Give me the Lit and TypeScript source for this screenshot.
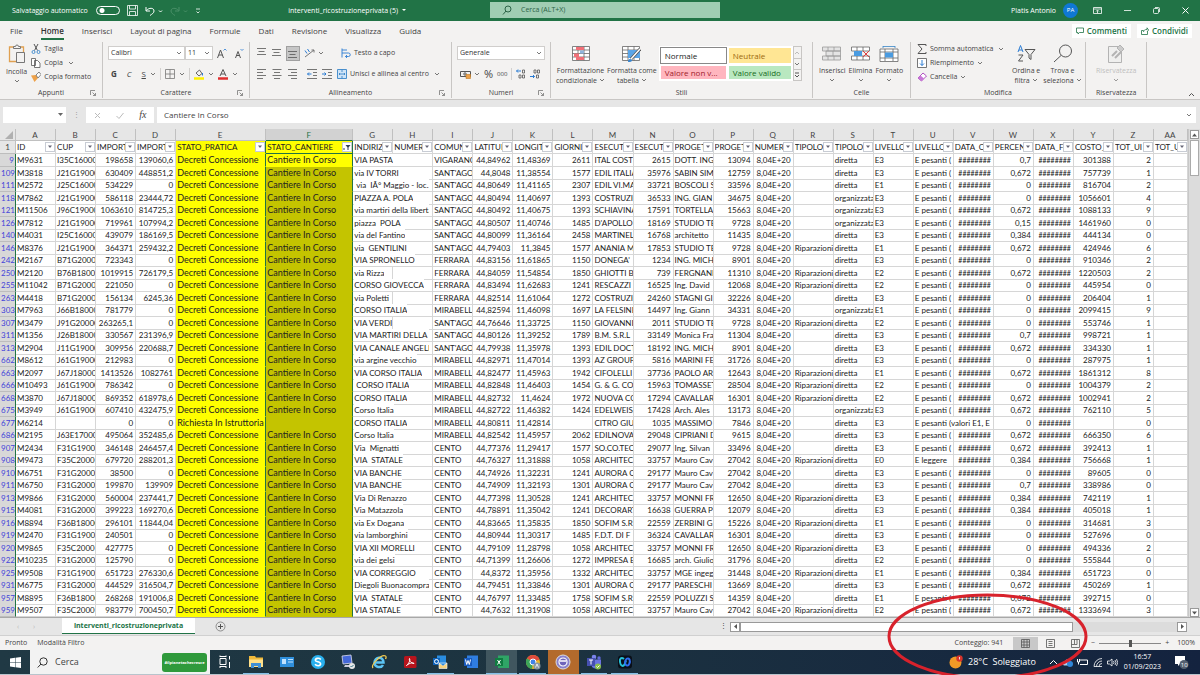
import { LitElement, html, svg, css, TemplateResult, SVGTemplateResult } from "lit";
import { customElement } from "lit/decorators.js";
import { classMap } from "lit/directives/class-map.js";

const icon = (w: number, h: number, body: SVGTemplateResult) =>
  html`<svg class="ic" width=${w} height=${h} viewBox="0 0 ${w} ${h}" fill="none" stroke="#555" aria-hidden="true">${body}</svg>`;

const chev = () => icon(6, 4, svg`<path d="M1 1l2 2 2-2" stroke="#555" stroke-width=".8"/>`);
const launcher = () => icon(6, 6, svg`<path d="M.5 5V.5H5M2.5 2.5l3 3M5.5 3v2.5H3" stroke="#777" stroke-width=".8"/>`);

const lines = (w: number[], align: "l" | "c" | "r") =>
  icon(10, 10, svg`${w.map((n, i) => {
    const x = align === "l" ? 0 : align === "c" ? (10 - n) / 2 : 10 - n;
    return svg`<path stroke-width=".8" d="M${x} ${i * 3 + 0.5}h${n}"/>`;
  })}`);

const bars = (top: number) =>
  icon(10, 10, svg`<path stroke-width=".8" d="M0 ${top + 0.5}h9M1.5 ${top + 3.5}h6M0 ${top + 6.5}h9"/>`);

const gridPath = "M.5 .5h17v14H.5zM.5 4h17M.5 7.5h17M.5 11h17M6 .5v14M12 .5v14";

const letters = "A B C D E F G H I J K L M N O P Q R S T U V W X Y Z AA".split(" ");
const heads = [
  "ID", "CUP", "IMPORTO", "IMPORTO", "STATO_PRATICA", "STATO_CANTIERE", "INDIRIZZO", "NUMERO", "COMUNE",
  "LATITUDINE", "LONGITUDINE", "GIORNI", "ESECUTORE", "ESECUTORE", "PROGETTISTA", "PROGETTISTA", "NUMERO",
  "TIPOLOGIA", "TIPOLOGIA", "LIVELLO", "LIVELLO", "DATA_C", "PERCENT", "DATA_F", "COSTO_", "TOT_UI", "TOT_UI",
];
const numeric = new Set([2, 3, 9, 10, 11, 13, 15, 16, 21, 22, 23, 24, 25]);

// riga;id;cup;importo;importo;indirizzo;comune;lat;lon;giorni;esecutore;cod;progettista;cod;riparazione;tipo;livello;perc;costo;unità
const source = `9;M9631;I35C16000;198658;139060,6;VIA PASTA;VIGARANO;44,84962;11,48369;2611;ITAL COST;2615;DOTT. ING;13094;;d;E3;0,7;301388;2
109;M3818;J21G19000;630409;448851,2;via IV TORRI;SANT'AGOSTINO;44,8048;11,38554;1577;EDIL ITALIA;35976;SABIN SIM;12759;;d;E3;0,672;757739;1
111;M2572;J25C16000;534229;0; via  IÂ° Maggio - loc.;SANT'AGOSTINO;44,80649;11,41165;2307;EDIL VI.MA;33721;BOSCOLI S;33596;;d;E1;0;816704;2
118;M7862;J21G19000;586118;23444,72;PIAZZA A. POLA;SANT'AGOSTINO;44,80494;11,40697;1393;COSTRUZIO;36533;ING. GIAN;34675;;o;E3;0;1056601;4
121;M11506;J96C19000;1063610;814725,3;via martiri della libertà;SANT'AGOSTINO;44,80492;11,40675;1393;SCHIAVINA;17591;TORTELLA;15663;;o;E3;0,672;1088133;9
126;M7812;J21G19000;719961;107994,2;piazza  POLA;SANT'AGOSTINO;44,80507;11,40746;1485;D'APOLLO;18169;STUDIO TE;9728;;o;E3;0,15;1461960;0
140;M4031;I25C16000;439079;186169,5;via del Fantino;SANT'AGOSTINO;44,80099;11,36164;2458;MARTINELLI;16768;architetto;11435;;d;E3;0,384;444134;0
146;M8376;J21G19000;364371;259432,2;via  GENTILINI;SANT'AGOSTINO;44,79403;11,3845;1577;ANANIA M;17853;STUDIO TE;9728;R;d;E1;0,672;424946;6
242;M2167;B71G20000;723343;0;VIA SPRONELLO;FERRARA;44,83156;11,61865;1150;DONEGA';1234;ING. MICH;8901;;d;E3;0;910346;2
250;M2120;B76B18000;1019915;726179,5;via Rizza;FERRARA;44,84059;11,54854;1850;GHIOTTI B;739;FERGNANI;11310;R;d;E2;0,672;1220503;2
255;M11042;B71G20000;221050;0;CORSO GIOVECCA;FERRARA;44,83494;11,62683;1241;RESCAZZI;16525;Ing. David;12068;R;d;E2;0;445954;0
263;M4418;B71G20000;156134;6245,36;via Poletti;FERRARA;44,82514;11,61064;1272;COSTRUZIO;24260;STAGNI GI;32226;;d;E3;0;206404;1
303;M7963;J66B18000;781779;0;CORSO ITALIA;MIRABELLO;44,82594;11,46098;1697;LA FELSINE;14497;Ing. Giann;34331;;o;E1;0;2099415;9
307;M3479;J91G20000;263265,1;0;VIA VERDI;SANT'AGOSTINO;44,76646;11,33725;1150;GIOVANNI;2011;STUDIO TE;9728;R;d;E2;0;553746;1
311;M1356;J26B18000;330567;231396,9;VIA MARTIRI DELLA LIBERTA;SANT'AGOSTINO;44,80126;11,39252;1789;B.M. S.R.L;33149;Monica Fra;11304;;d;E3;0,7;998721;1
313;M2904;J11G19000;309956;220688,7;VIA CANALE ANGELINO;SANT'AGOSTINO;44,79938;11,35978;1393;EDIL DOCT;18192;ING. MICH;8901;;d;E3;0,672;334330;1
662;M8612;J61G19000;212983;0;via argine vecchio;MIRABELLO;44,82971;11,47014;1393;AZ GROUP;5816;MARINI FE;31726;;d;E3;0;287975;1
663;M2097;J67J18000;1413526;1082761;VIA CORSO ITALIA;MIRABELLO;44,82477;11,45963;1942;CIFOLELLI;37736;PAOLO AR;12643;R;d;E1;0,672;1861312;8
666;M10493;J61G19000;786342;0; CORSO ITALIA;MIRABELLO;44,82848;11,46403;1454;G. & G. CO;15963;TOMASSET;28504;R;d;E2;0;1004379;2
668;M3870;J67J18000;869352;618978,6;CORSO ITALIA;MIRABELLO;44,82732;11,4624;1972;NUOVA CO;17294;CAVALLARI;16301;R;d;E2;0,672;1002941;2
675;M3949;J61G19000;607410;432475,9;Corso Italia;MIRABELLO;44,82722;11,46382;1424;EDELWEISS;17428;Arch. Ales;13173;;o;E3;0,672;762110;5
677;M6214;;0;0;CORSO ITALIA;MIRABELLO;44,80811;11,42814;;CITRO GIU;1035;MASSIMO;7846;;d;E3;0;;0
686;M2195;J63E17000;495064;352485,6;Corso Italia;MIRABELLO;44,82542;11,45957;2062;EDILNOVA;29048;CIPRIANI D;9615;;d;E3;0,672;666350;6
907;M2434;F31G19000;346148;246457,4;Via  Mignatti;CENTO;44,77376;11,29417;1577;SO.CO.TEC;29077;Ing. Silvan;33496;;d;E3;0,672;392413;1
908;M9473;F35C20001;679720;288201,3;VIA  STATALE;CENTO;44,76327;11,31888;1058;ARCHITEC;33757;Mauro Cav;27042;R;d;E0;0,384;756668;1
910;M6751;F31G20000;38500;0;VIA BANCHE;CENTO;44,74926;11,32231;1241;AURORA C;29177;Mauro Cav;27042;;d;E3;0;89605;0
911;M6750;F31G20000;199870;139909;VIA BANCHE;CENTO;44,74909;11,32193;1301;AURORA C;29177;Mauro Cav;27042;;d;E3;0,7;338986;0
913;M9866;F31G20000;560004;237441,7;Via Di Renazzo;CENTO;44,77398;11,30528;1241;ARCHITEC;33757;MONNI FR;12650;R;d;E3;0,384;742119;1
915;M4081;F31G20000;399223;169270,6;Via Matazzola;CENTO;44,78891;11,35042;1241;DECORART;16638;GUERRA P;12079;;d;E3;0,384;405018;1
916;M8894;F36B18000;296101;11844,04;via Ex Dogana;CENTO;44,83665;11,35835;1850;SOFIM S.R;22559;ZERBINI G;15226;R;d;E1;0;314681;3
919;M2470;F31G19000;240501;0;via lamborghini;CENTO;44,80944;11,30317;1485;F.D.T. DI F;36324;CAVALLARI;16301;;d;E3;0;527696;0
920;M9865;F35C20001;427775;0;VIA XII MORELLI;CENTO;44,79109;11,28798;1058;ARCHITEC;33757;MONNI FR;12650;R;d;E3;0;494336;2
922;M10235;F31G20000;125790;0;via dei gelsi;CENTO;44,71399;11,26606;1272;IMPRESA E;16685;arch. Giulio;31796;;d;E2;0;555844;0
925;M9508;F31G19000;651723;276330,6;VIA CORREGGIO;CENTO;44,8372;11,35956;1332;ARCHITEC;33757;MGE ingeg;31448;R;d;E1;0,384;651723;0
931;M6775;F31G20000;444529;316504,7;Diegoli Buonacompra;CENTO;44,79451;11,33846;1301;AURORA C;29177;PARESCHI;13669;;d;E3;0,672;450269;1
957;M8895;F36B18000;268268;191006,8;VIA  STATALE;CENTO;44,76797;11,33485;1758;SOFIM S.R;22559;POLUZZI S;14359;;d;E1;0,672;392715;0
959;M9507;F35C20001;983779;700450,7;VIA STATALE;CENTO;44,7632;11,31908;1058;ARCHITEC;33757;Mauro Cav;27042;R;d;E2;0,672;1333694;3`;

const rows = source.split("\n").map((line) => {
  const f = line.split(";");
  const pending = f[0] === "677";
  return {
    n: f[0],
    cells: [
      f[1], f[2], f[3], f[4],
      pending ? "Richiesta In Istruttoria" : "Decreti Concessione",
      pending ? "" : "Cantiere In Corso",
      f[5], "", f[6], f[7], f[8], f[9], f[10], f[11], f[12], f[13], "8,04E+20",
      f[14] ? "Riparazioni" : "",
      f[15] === "d" ? "diretta" : "organizzata",
      f[16],
      f[0] === "908" ? "E leggere" : pending ? "E pesanti (valori E1, E2" : "E pesanti (",
      pending ? "" : "########",
      f[17], "########", f[18], f[19], "",
    ],
  };
});

const big = (glyph: TemplateResult, a: string, b: string, cls = "") => html`
  <button class="big ${cls}">${glyph}<span>${a}</span><span class="sub">${b}${chev()}</span></button>`;

@customElement("app-root")
export class AppRoot extends LitElement {
  static styles = css`
    :host { display: flex; flex-direction: column; position: relative; height: 100vh; overflow: hidden;
      font: 7px/10px "Open Sans", "Noto Sans", sans-serif; color: #444; background: #e6e6e6; }
    * { box-sizing: border-box; }
    button, input, select { font: inherit; color: inherit; border: 0; background: none; padding: 0; margin: 0; border-radius: 0; min-width: 0; }
    button { display: inline-flex; align-items: center; justify-content: center; gap: 3px; white-space: nowrap; }
    .ic { flex: none; display: block; }
    .row { display: flex; align-items: center; }

    .title { display: grid; grid-template-columns: 490fr 230fr 480fr; height: 21px; background: #217346; color: #fff; flex: none; }
    .quick { gap: 7px; padding-left: 12px; }
    .auto { display: flex; align-items: center; gap: 8px; }
    .switch { appearance: none; width: 24px; height: 9px; border: 1px solid #fff; border-radius: 5px;
      background: radial-gradient(circle at 5px 50%, #fff 2px, transparent 3px); }
    .file { margin-left: auto; margin-right: 84px; gap: 4px; }
    .find { background: #a0cdb3; color: #2c6347; margin: 2px 0 3px; padding-left: 12px; gap: 9px; }
    .find input { flex: 1; }
    input::placeholder { color: inherit; opacity: 1; }
    .win { justify-content: flex-end; gap: 22px; padding-right: 11px; }
    .user { gap: 7px; margin-right: -7px; }
    .avatar { width: 15px; height: 15px; border-radius: 50%; background: #0f78d4; text-align: center; line-height: 15px; font-size: 6px; }

    .tabs { height: 20px; flex: none; background: #f3f2f1; padding: 0 8px 0 10px; gap: 18px; font-size: 8px; }
    .tabs a { color: #444; text-decoration: none; line-height: 15px; border-bottom: 2px solid transparent; }
    .tabs a.on { font-weight: 600; color: #333; border-color: #217346; }
    .share { margin-left: auto; gap: 6px; }
    .share button { background: #fff; color: #217346; font-weight: 600; height: 14px; padding: 0 4px; }

    .ribbon { display: flex; height: 59px; flex: none; background: #f3f2f1; border-bottom: 1px solid #c8c6c4; }
    .group { display: flex; flex-direction: column; border-right: 1px solid #c8c6c4; padding: 2px 2px 0; margin: 1px 0; }
    .body { flex: 1; display: flex; min-height: 0; }
    .foot { display: grid; grid-template-columns: 10px 1fr 10px; align-items: center; text-align: center; height: 10px; }
    .foot span { grid-column: 2; }
    .clip { flex: 0 0 103px; } .font { flex: 0 0 144px; } .align { flex: 0 0 202px; } .num { flex: 0 0 97px; }
    .styles { flex: 0 0 262px; } .cells { flex: 0 0 98px; } .edit { flex: 0 0 175px; } .priv { flex: 0 0 52px; }
    .group.priv { padding: 2px 0 0; }
    .big { flex-direction: column; gap: 0; justify-content: flex-start; }
    .big .ic:first-child { margin-bottom: 3px; }
    .big .sub { display: flex; align-items: center; gap: 2px; min-height: 10px; }
    .off { color: #aaa; opacity: .7; }
    .stack { display: flex; flex-direction: column; align-items: flex-start; gap: 4px; padding-left: 4px; }
    .clip .body { padding-left: 4px; }
    .edit .body { gap: 3px; }
    .edit .stack { width: 96px; }
    .priv .body { justify-content: center; }
    .styles .body { gap: 2px; padding: 2px 0 0 3px; }
    .cells .body { gap: 3px; padding: 2px 0 0 4px; }
    .lines { display: flex; flex-direction: column; gap: 7px; padding: 2px 3px; flex: 1; }
    .lines .row { height: 14px; }
    .grow { gap: 8px; margin-left: 4px; }
    .marks { gap: 4px; padding-left: 3px; }
    .letters3 { gap: 10px; }
    .tools { gap: 5px; padding-left: 2px; }
    .wrap { margin-left: 12px; }
    .drop { display: grid; align-items: center; background: #fff; border: 1px solid #d0cecc; height: 14px; }
    .drop select { appearance: none; grid-area: 1/1; width: 100%; padding-left: 2px; outline: 0; color: #333; }
    .drop .ic { grid-area: 1/1; justify-self: end; margin-right: 2px; pointer-events: none; }
    .face { width: 77px; } .size { width: 28px; } .fmt { width: 88px; }
    .sep { width: 1px; height: 12px; background: #d2d0ce; }
    .gly { font-size: 8px; }
    .pct-sign { font-size: 11px; }
    .thousand { font-size: 6px; }
    .pressed { background: #c6c6c6; outline: 1px solid #a0a0a0; height: 13px; width: 12px; }
    .picker { align-items: flex-start; }
    .gallery { display: grid; grid-template-columns: 65px 62px; grid-template-rows: 15px 13px; gap: 3px; background: #fff; padding: 2px; font-size: 8px; }
    .gallery button { justify-content: flex-start; padding-left: 4px; }
    .normal { outline: 1px solid #888; color: #222; } .neutral { background: #ffe694; color: #9c6a10; }
    .bad { background: #ffb6bf; color: #a01c2c; } .good { background: #b9e8c0; color: #176a20; }
    .spin { display: grid; grid-template-rows: repeat(3, 1fr); width: 9px; height: 35px; border: 1px solid #c8c6c4; }
    .spin button + button { border-top: 1px solid #c8c6c4; }
    .fold { margin: auto 5px 2px auto; }

    .formula { display: grid; grid-template-columns: 63px 14px 68px 1fr; gap: 3px; padding: 7px 4px 6px 3px; height: 29px; flex: none; align-items: stretch; }
    .formula > * { background: #fff; }
    .formula .drop { border: 0; height: auto; }
    .formula .drop input { grid-area: 1/1; width: 100%; }
    .formula .dots { background: none; color: #999; text-align: center; line-height: 15px; }
    .fx { justify-content: space-around; }
    .fn { font: italic 10px/10px "Liberation Serif", serif; }
    .entry { display: grid; grid-template-columns: 1fr 10px; align-items: center; padding-left: 7px; font-size: 8px; }

    .work { flex: 1; min-height: 0; display: grid; grid-template-columns: 1fr 12px; }
    table { display: grid; grid-template-rows: 12px 13px repeat(37, minmax(0, 1fr)); min-width: 0; min-height: 0; font: 8px/12px Lato, "Open Sans", sans-serif; color: #222; background: #fff; }
    thead, tbody { display: contents; }
    tr { display: grid; min-height: 0; grid-template-columns: 16px repeat(4, minmax(0, 40fr)) minmax(0, 90fr) minmax(0, 87fr) repeat(20, minmax(0, 40fr)) minmax(0, 34fr); }
    th, td { padding: 0 2px 0 1px; border-right: 1px solid #d6d6d6; border-bottom: 1px solid #d6d6d6; overflow: hidden; white-space: pre; text-align: left; font-weight: 400; min-width: 0; }
    .letters th { background: #e6e6e6; text-align: center; color: #444; border-color: #c0c0c0; }
    .letters .sel { background: #d2d2d2; border-bottom: 1px solid #217346; color: #217346; }
    tr th.idx { background: #d8d8d8; color: #4343d8; padding: 0 1px; text-align: right; border-right: 1px solid #217346; border-bottom-color: #bdbdbd; }
    tr.names th.idx { color: #444; background: #e6e6e6; border-right-color: #c0c0c0; text-align: center; }
    .names td { display: flex; align-items: center; padding-right: 0; }
    .names td span { flex: 1; overflow: hidden; min-width: 0; }
    .flt { flex: none; width: 10px; height: 10px; background: #fff; border: 1px solid #c8ccd4; }
    .r { text-align: right; }
    td.hash { font-size: 7px; color: #111; }
    td.e { background: #ff0; border-color: #ff0; border-right-color: #217346; }
    td.f { background: #c4c400; border-color: #c4c400; border-right-color: #217346; }
    .data td.e, .data td.f { font-size: 9px; }
    .names td.f, tr.first td.f { background: #ff0; border-bottom-color: #ff0; }
    .names td.f { border-bottom-color: #217346; }
    td.spill { overflow: visible; }
    td.spill span { display: block; position: relative; width: max-content; max-width: calc(200% + 3px); overflow: hidden; background: #fff; }
    .vbar { display: flex; flex-direction: column; background: #dcdcdc; border-left: 1px solid #c8c8c8; align-items: center; }
    .vbar button { width: 9px; height: 9px; background: #fff; border: 1px solid #999; margin-top: 1px; }
    .thumb { width: 9px; height: 36px; margin-top: 1px; background: #fff; border: 1px solid #aaa; }
    .vbar button:last-child { margin-top: auto; }

    .sheets { display: grid; grid-template-columns: 62px 133px 1fr 480px; height: 19px; flex: none; border-top: 1px solid #a8a8a8; border-bottom: 1px solid #d0d0d0; align-items: center; }
    .nav { gap: 14px; padding-left: 17px; color: #bbb; }
    .tab { background: #fff; color: #217346; font-weight: 700; height: 16px; align-self: start; border-bottom: 1px solid #217346; }
    .plus { justify-self: start; margin-left: 20px; }
    .hbar { display: grid; grid-template-columns: 10px 10px minmax(0, 333fr) minmax(0, 104fr) 10px; height: 10px; margin-right: 13px; }
    .hbar > * { border: 1px solid #999; background: #fff; }
    .hbar .grip, .hbar .rest { border: 0; background: none; } .hbar .rest { background: #dcdcdc; }
    .grip { line-height: 8px; }

    .status { height: 14px; flex: none; background: #f3f2f1; padding: 0 5px; gap: 10px; }
    .count { margin-left: auto; }
    .gauge { gap: 3px; }
    .views button { width: 25px; height: 13px; } .views .on { background: #c8c8c8; }
    .zoom { gap: 4px; }
    .zoom input { appearance: none; width: 62px; height: 9px; background: linear-gradient(#888, #888) center / 100% 1px no-repeat; }
    .zoom input::-webkit-slider-thumb { appearance: none; width: 3px; height: 7px; background: #555; }
    .pct { margin-left: 4px; }

    .task { display: grid; grid-template-columns: 30px 180px minmax(0, 430px) 1fr; height: 25px; flex: none; background: linear-gradient(90deg, #203944, #1c3340 45%, #14233f); border-bottom: 1px solid #b8c4cc; color: #fff; }
    .cerca { background: #f2f2f2; color: #444; gap: 7px; padding: 0 3px 0 7px; font-size: 9px; }
    .cerca input { flex: 1; }
    .badge { flex: none; background: #2f9a3c; color: #fff; font-size: 4px; font-weight: 700; width: 45px; height: 19px; border-radius: 3px; text-align: center; line-height: 19px; overflow: hidden; }
    .apps { display: flex; }
    .apps button { flex: 1; border-bottom: 1px solid transparent; }
    .apps .open { border-image: linear-gradient(90deg, transparent 10%, #84bfe8 10% 90%, transparent 90%) 1; }
    .apps .cur { background: #40565f; border-color: #84bfe8; } .apps .hot { background: #b36a2c; }
    .tray { justify-content: flex-end; gap: 4px; padding-right: 11px; }
    .meteo { font-size: 9px; gap: 5px; margin-right: 9px; }
    .clock { text-align: center; line-height: 10px; margin: 0 9px 0 2px; }
    .ring { position: absolute; right: 111px; bottom: -5px; width: 203px; height: 87px; pointer-events: none; }
  `;

  private titleBar() {
    return html`<header class="title">
      <div class="row quick">
        <label class="auto">Salvataggio automatico<input class="switch" type="checkbox" /></label>
        <button aria-label="Salva">${icon(11, 11, svg`<path stroke="#fff" stroke-width=".8" d="M.5 .5h10v10h-10zM2.5 .5v3.500h6V.5M2.500 10.500v-4h6v4"/>`)}</button>
        <button aria-label="Annulla">${icon(18, 10, svg`<path stroke="#fff" d="M1 1v4h4M1.300 4.500C4 1.500 9 1.500 9 5c0 2-2 3-4 4.500M14 4.500l1.500 1.500L17 4.500"/>`)}</button>
        <button aria-label="Ripeti">${icon(18, 10, svg`<path stroke="#4a9068" d="M9 1v4H5M8.700 4.500C6 1.500 1 1.500 1 5c0 2 2 3 4 4.500M14 4.500l1.500 1.500L17 4.500"/>`)}</button>
        <button aria-label="Personalizza">${icon(6, 6, svg`<path stroke="#fff" stroke-width=".8" d="M1 1h4M1.500 3.500L3 5l1.500-1.500"/>`)}</button>
        <span class="row file">interventi_ricostruzioneprivata (5) ${icon(4, 3, svg`<path d="M0 0h4L2 2z" fill="#fff" stroke="none"/>`)}</span>
      </div>
      <label class="row find">${icon(10, 10, svg`<circle cx="6" cy="4" r="3" stroke="#2c6347"/><path stroke="#2c6347" d="M4 6L1 9.500"/>`)}<input aria-label="Cerca" placeholder="Cerca (ALT+X)" /></label>
      <div class="row win">
        <span class="row user">Platis Antonio <span class="avatar">PA</span></span>
        <button aria-label="Opzioni barra">${icon(9, 7, svg`<path stroke="#fff" stroke-width=".8" d="M.5 .5h8v6h-8zM.5 2h8M4.500 6V3.500M3 4.500l1.500-1.500L6 4.500"/>`)}</button>
        <button aria-label="Riduci">${icon(7, 7, svg`<path stroke="#fff" stroke-width=".8" d="M0 3.500h7"/>`)}</button>
        <button aria-label="Ripristina">${icon(7, 7, svg`<rect x=".5" y="1.500" width="5" height="5" rx="1" stroke="#fff" stroke-width=".8"/><path stroke="#fff" stroke-width=".8" d="M2 .5h3.500a1 1 0 0 1 1 1V5"/>`)}</button>
        <button aria-label="Chiudi">${icon(7, 7, svg`<path stroke="#fff" d="M.5 .5l6 6M6.500 .5l-6 6"/>`)}</button>
      </div>
    </header>`;
  }

  private tabBar() {
    const names = ["File", "Home", "Inserisci", "Layout di pagina", "Formule", "Dati", "Revisione", "Visualizza", "Guida"];
    return html`<nav class="row tabs">
      ${names.map((n) => html`<a href="#" class=${classMap({ on: n === "Home" })}>${n}</a>`)}
      <div class="row share">
        <button>${icon(8, 8, svg`<path stroke="#217346" stroke-width=".8" d="M.5 1h7v4.500H3.500L2 7V5.500H.5z"/>`)}Commenti</button>
        <button>${icon(8, 8, svg`<path stroke="#217346" stroke-width=".8" d="M2.500 3.500H.5v4h6v-3M2.500 5c0-2 1.500-2.500 3.500-2.500V.8L7.600 3 6 5"/>`)}Condividi</button>
      </div>
    </nav>`;
  }

  private drop(cls: string, label: string, value: string) {
    return html`<div class="drop ${cls}"><select aria-label=${label}><option>${value}</option></select>${chev()}</div>`;
  }

  private ribbon() {
    return html`<section class="ribbon">
      <div class="group clip"><div class="body">
        ${big(icon(18, 20, svg`<path stroke="#e0a050" stroke-width="1.300" d="M6 3H1.500v14.500H8M12 3h3.500v5"/><path stroke="#777" fill="#f3f2f1" d="M5.500 4.500v-2h2a1.500 1.500 0 0 1 3 0h2v2zM8.500 8.500h8v10h-8z"/>`), "Incolla", "")}
        <div class="stack">
          <button>${icon(10, 10, svg`<path stroke="#555" d="M3 0l3.500 6.500M7 0L3.500 6.500"/><circle cx="2.500" cy="8" r="1.500" stroke="#4a90d0"/><circle cx="7.500" cy="8" r="1.500" stroke="#4a90d0"/>`)}Taglia</button>
          <button>${icon(10, 10, svg`<path stroke-width=".8" fill="#fff" d="M.5 .5h4v7h-4zM3.500 2.500h3l2.500 2.500v4.500H3.500z"/>`)}Copia&nbsp; ${chev()}</button>
          <button>${icon(10, 10, svg`<path fill="#eea24a" stroke="none" d="M0 3.500L5 3l2 3-3.500 4z"/><path d="M5 3l2 3L10 2.500 8 0z" stroke="#666" stroke-width=".8" fill="#fff"/>`)}Copia formato</button>
        </div>
      </div><div class="foot"><span>Appunti</span>${launcher()}</div></div>

      <div class="group font"><div class="body lines">
        <div class="row">${this.drop("face", "Carattere", "Calibri")}${this.drop("size", "Dimensione", "11")}
          <div class="row grow">
          <button aria-label="Aumenta">${icon(10, 11, svg`<path d="M.5 10L3.500 2l3 8M2 7h3.500"/><path stroke="#2b7cd3" stroke-width=".8" d="M6.500 2.500L8 1l1.500 1.500"/>`)}</button>
          <button aria-label="Riduci">${icon(9, 11, svg`<path d="M.5 10L3 3.500 5.500 10M1.500 7.500h3"/><path stroke="#2b7cd3" stroke-width=".8" d="M5.500 1L7 2.500 8.500 1"/>`)}</button></div></div>
        <div class="row marks">
          <span class="row letters3"><button class="gly" aria-label="Grassetto"><b>G</b></button><button class="gly" aria-label="Corsivo"><i>C</i></button><button class="gly" aria-label="Sottolineato"><u>S</u></button></span>${chev()}<i class="sep"></i>
          <button aria-label="Bordi">${icon(10, 10, svg`<path stroke="#777" stroke-width=".8" d="M.5 .5h9v9h-9zM5 .5v9M.5 5h9"/>`)}</button>${chev()}<i class="sep"></i>
          <button aria-label="Riempimento">${icon(10, 11, svg`<path d="M2 4l3.500-3L8 4.500 5 7z" stroke-width=".9"/><path d="M8.500 4v2.500" stroke="#2b7cd3"/><path d="M0 9.500h10" stroke="#fff100" stroke-width="2.500"/>`)}</button>${chev()}
          <button aria-label="Colore">${icon(10, 11, svg`<path d="M2 7l3-6.500L8 7M3 5h4" /><path d="M0 9.500h10" stroke="#e03030" stroke-width="2.500"/>`)}</button>${chev()}
        </div>
      </div><div class="foot"><span>Carattere</span>${launcher()}</div></div>

      <div class="group align"><div class="body lines">
        <div class="row tools">
          <button aria-label="In alto">${bars(0)}</button><button aria-label="Al centro">${bars(1)}</button><button class="pressed" aria-label="In basso">${bars(3)}</button>
          <button aria-label="Orientamento">${icon(11, 10, svg`<path d="M1 9L10 2M7.500 2H10v2.500" stroke="#777"/><path d="M1 2.500l2 3M3.500 1l2 3" stroke="#2b7cd3"/>`)}${chev()}</button>
          <button class="wrap">${icon(10, 10, svg`<path d="M1 .5v9M1 2h5M1 5h6.500a1.500 1.500 0 0 1 0 3.500H4.500M6 7L4.500 8.500 6 10" stroke="#2b7cd3" stroke-width=".9"/>`)}Testo a capo</button></div>
        <div class="row tools">
          <button aria-label="A sinistra">${lines([9, 6, 9, 6], "l")}</button><button aria-label="Centra">${lines([9, 6, 9, 6], "c")}</button><button aria-label="A destra">${lines([9, 6, 9, 6], "r")}</button>
          <i></i><button aria-label="Riduci rientro">${icon(10, 10, svg`<path stroke-width=".8" d="M0 .5h10M6 3.500h4M6 6.500h4M0 9.500h10"/><path d="M4.500 5H.5M2 3.500L.5 5 2 6.500" stroke="#2b7cd3"/>`)}</button><button aria-label="Aumenta rientro">${icon(10, 10, svg`<path stroke-width=".8" d="M0 .5h10M6 3.500h4M6 6.500h4M0 9.500h10"/><path d="M0 5h4M2.500 3.500L4 5 2.500 6.500" stroke="#2b7cd3"/>`)}</button>
          <button>${icon(10, 10, svg`<path fill="#cfe4f7" stroke="#3a86c8" stroke-width=".9" d="M.5 .5h9v9h-9zM5 .5v2.500M5 7v2.500M2 5h6M3 4L2 5l1 1M7 4l1 1-1 1"/>`)}Unisci e allinea al centro&nbsp; ${chev()}</button></div>
      </div><div class="foot"><span>Allineamento</span>${launcher()}</div></div>

      <div class="group num"><div class="body lines">
        <div class="row">${this.drop("fmt", "Formato numero", "Generale")}</div>
        <div class="row marks">
          <button aria-label="Valuta">${icon(11, 9, svg`<path d="M.5 1.500h10v5H.5z"/><circle cx="5" cy="4" r="1.200"/><path fill="#eea24a" stroke="#c07820" stroke-width=".6" d="M6 4.500h4.500v4H6z"/>`)}${chev()}</button>
          <button class="pct-sign" aria-label="Percentuale">%</button><button class="thousand">000</button><i class="sep"></i>
          <button aria-label="Aumenta decimali">${icon(10, 10, svg`<path stroke="#2b7cd3" d="M5 2H.5M2 .5L.5 2 2 3.500"/><path stroke-width=".8" d="M6.500 1h2v3h-2zM3 6h2v3H3zM6.500 6h2v3h-2z"/>`)}</button>
          <button aria-label="Diminuisci decimali">${icon(10, 10, svg`<path stroke="#2b7cd3" d="M0 7.500h4.500M3 6l1.500 1.500L3 9"/><path stroke-width=".8" d="M4 1h2v3H4zM7.500 1h2v3h-2zM6.500 6h2v3h-2z"/>`)}</button>
        </div>
      </div><div class="foot"><span>Numeri</span>${launcher()}</div></div>

      <div class="group styles"><div class="body">
        ${big(icon(18, 17, svg`<path fill="#fff" d="${gridPath}" stroke="#666" stroke-width=".8"/><path fill="#f07078" stroke="none" d="M4 1h8v3H4zM2 7.500h5V11H2zM4 11h8v3H4z"/><path fill="#8fb4dc" stroke="none" d="M8 4.500h4v3H8z"/>`), "Formattazione", "condizionale")}
        ${big(icon(19, 17, svg`<path fill="#fff" d="${gridPath}" stroke="#666" stroke-width=".8"/><path fill="#5aa5e8" stroke="none" d="M6 4h12v8H6z"/><path d="M18 3l-9 10" stroke="#555" stroke-width="3"/><path d="M18 3l-9 10" stroke="#fff" stroke-width="1.500"/><path d="M6 16c0-3 2-4 4-2 0 2-2 2-4 2z" fill="#3a86d0" stroke="none"/>`), "Formatta come", "tabella")}
        <div class="row picker"><div class="gallery">
          <button class="normal">Normale</button><button class="neutral">Neutrale</button><button class="bad">Valore non v...</button><button class="good">Valore valido</button>
        </div><div class="spin"><button aria-label="Su">${icon(6, 4, svg`<path d="M1 3l2-2 2 2" stroke="#bbb"/>`)}</button><button aria-label="Giù">${chev()}</button><button aria-label="Altro">${icon(6, 6, svg`<path d="M1 1h4M1 3l2 2 2-2"/>`)}</button></div></div>
      </div><div class="foot"><span>Stili</span></div></div>

      <div class="group cells"><div class="body">
        ${big(icon(20, 17, svg`<path stroke="#999" fill="#e4e4e4" stroke-width=".8" d="M.5 1h18v4H.5zM.5 10h18v4H.5zM6 1v4M12 1v4M6 10v4M12 10v4M4 5h14.500v5H4zM11 5v5"/>`), "Inserisci", "")}
        ${big(icon(20, 17, svg`<path stroke="#666" fill="#fff" stroke-width=".8" d="M.5 1h18v4H.5zM.5 10h18v4H.5zM6 1v4M12 1v4M6 10v4M12 10v4"/><path fill="#4a9be0" stroke="none" d="M3 5h8v5H3z"/><path stroke="#e04040" d="M12 5l6 6M18 5l-6 6"/>`), "Elimina", "")}
        ${big(icon(20, 17, svg`<path stroke="#3a86c8" d="M4 .5h12M4 0v2M16 0v2" stroke-width=".8"/><path stroke="#666" fill="#fff" stroke-width=".8" d="M1 3h18v12.500H1zM1 6h18M1 12h18M6 3v12M14 3v12"/><path fill="#4a9be0" stroke="none" d="M6 6.500h8v5H6z"/>`), "Formato", "")}
      </div><div class="foot"><span>Celle</span></div></div>

      <div class="group edit"><div class="body">
        <div class="stack">
          <button>${icon(10, 10, svg`<path d="M9 2V.5H1L5 5 1 9.500h8V8"/>`)}Somma automatica&nbsp; ${chev()}</button>
          <button>${icon(10, 10, svg`<path fill="#fff" d="M.5 .5h9v9h-9z" stroke-width=".8"/><path stroke="#2b7cd3" d="M5 2v5.500M3 5.500l2 2 2-2"/>`)}Riempimento ${chev()}</button>
          <button>${icon(10, 10, svg`<path fill="#fff" stroke="#b050c0" d="M1 6l5-5 3.500 3-5 5z"/><path fill="#c878d8" stroke="none" d="M1 6l2.500-2.500L7 6.500 4.500 9z"/>`)}Cancella ${chev()}</button>
        </div>
        ${big(icon(19, 19, svg`<path stroke="#2b7cd3" d="M1 8l2.500-6.500L6 8M2 6h3"/><path d="M1.500 11H6l-4.500 6H6"/><path d="M8 5.500h10l-4 5v5l-2-1.500v-3.500z"/>`), "Ordina e", "filtra")}
        ${big(icon(20, 19, svg`<circle cx="12.500" cy="7" r="6"/><path d="M8 11.500L1 18"/>`), "Trova e", "seleziona")}
      </div><div class="foot"><span>Modifica</span></div></div>

      <div class="group priv"><div class="body">
        ${big(icon(18, 19, svg`<path fill="#eee" stroke="#999" d="M1.500 2.500h13v16h-13z"/><path d="M5 12l5-5M8 14l6-6" stroke="#999" stroke-width="2"/><path d="M10 4l3-3 4 4-3 3z" fill="#bbb" stroke="#999"/>`), "Riservatezza", "", "off")}
      </div><div class="foot"><span>Riservatezza</span></div></div>
      <button class="fold" aria-label="Comprimi">${icon(7, 5, svg`<path d="M1 4l2.500-2.500L6 4"/>`)}</button>
    </section>`;
  }

  private formulaBar() {
    return html`<div class="formula">
      <div class="drop"><input aria-label="Casella nome" />${icon(6, 4, svg`<path d="M0 0h5L2.500 3z" fill="#666" stroke="none"/>`)}</div>
      <span class="dots">⋮</span>
      <div class="row fx">
        <button aria-label="Annulla">${icon(7, 7, svg`<path stroke="#bbb" d="M1 1l5 5M6 1L1 6"/>`)}</button>
        <button aria-label="Invio">${icon(8, 7, svg`<path stroke="#bbb" d="M.5 4L3 6.500 7.500 1"/>`)}</button>
        <button class="fn" aria-label="Inserisci funzione">fx</button>
      </div>
      <div class="entry"><input aria-label="Barra della formula" value="Cantiere In Corso" />${chev()}</div>
    </div>`;
  }

  private sheet() {
    return html`<main class="work">
      <table>
        <thead>
          <tr class="letters"><th>${icon(13, 11, svg`<path d="M12 2v8H4z" fill="#b0b0b0" stroke="none"/>`)}</th>${letters.map((l) => html`<th class=${classMap({ sel: l === "F" })}>${l}</th>`)}</tr>
        </thead>
        <tbody>
          <tr class="names"><th class="idx">1</th>${heads.map((h, i) => html`<td class=${classMap({ e: i === 4, f: i === 5 })}><span>${h}</span><button class="flt" aria-label="Filtro">${i === 5
            ? icon(8, 7, svg`<path d="M2.500 1h5L5.500 3.500V6h-1V3.500z" fill="#345" stroke="none"/><path d="M0 5h2" stroke="#345"/>`)
            : icon(6, 4, svg`<path d="M1 .5h4L3 3z" fill="#667" stroke="none"/>`)}</button></td>`)}</tr>
          ${rows.map((r, ri) => html`<tr class=${classMap({ data: true, first: ri === 0 })}><th class="idx">${r.n}</th>${r.cells.map((c, i) => {
            const spill = i === 6 || (i === 20 && r.cells[21] === "");
            return html`<td class=${classMap({ r: numeric.has(i), hash: i === 21 || i === 23, e: i === 4, f: i === 5, spill })}>${spill ? html`<span>${c}</span>` : c}</td>`;
          })}</tr>`)}
        </tbody>
      </table>
      <div class="vbar"><button aria-label="Su">${icon(5, 4, svg`<path d="M0 3.500h5L2.500 .5z" fill="#555" stroke="none"/>`)}</button><div class="thumb"></div><button aria-label="Giù">${icon(5, 4, svg`<path d="M0 .5h5L2.500 3.500z" fill="#555" stroke="none"/>`)}</button></div>
    </main>
    <div class="sheets">
      <span class="row nav"><span>‹</span><span>›</span></span>
      <button class="tab">interventi_ricostruzioneprivata</button>
      <button class="plus" aria-label="Nuovo foglio">${icon(11, 11, svg`<circle cx="5.500" cy="5.500" r="4.500" stroke="#777" stroke-width=".8"/><path d="M3 5.500h5M5.500 3v5"/>`)}</button>
      <div class="hbar"><span class="grip">⋮</span><button aria-label="Sinistra">${icon(3, 5, svg`<path d="M3 0v5L0 2.500z" fill="#555" stroke="none"/>`)}</button><span></span><span class="rest"></span><button aria-label="Destra">${icon(3, 5, svg`<path d="M0 0v5l3-2.500z" fill="#555" stroke="none"/>`)}</button></div>
    </div>
    <div class="row status">
      <span>Pronto</span><span>Modalità Filtro</span><span class="count">Conteggio: 941</span>
      <div class="row gauge">
        <span class="row views"><button class="on" aria-label="Normale">${icon(9, 9, svg`<path stroke-width=".8" d="M.5 .5h8v8h-8zM3 .5v8M6 .5v8M.5 3h8M.5 6h8"/>`)}</button><button aria-label="Layout di pagina">${icon(9, 9, svg`<path stroke-width=".8" d="M.5 .5h8v8h-8zM2.500 2.500h4M2.500 4.500h4M2.500 6.500h4"/>`)}</button><button aria-label="Interruzioni">${icon(9, 9, svg`<path stroke-width=".8" d="M.5 .5h8v8h-8zM3.500 .5v5h2.500v-5M.5 5.500h3"/>`)}</button></span>
        <label class="row zoom">−<input type="range" aria-label="Zoom" value="50" />+<span class="pct">100%</span></label>
      </div>
    </div>`;
  }

  private taskbar() {
    const apps: [string, string, SVGTemplateResult][] = [
      ["Attività", "", svg`<path stroke="#fff" d="M3 4.500h6v6H3zM3 3V1.500M9 3V1.500M3 12v2M9 12v2M12.500 2v3.500M12.500 8v6M3 2.500h6M3 12.500h6"/>`],
      ["Esplora file", "open", svg`<path fill="#f0b93a" stroke="none" d="M1 2h6l1 1.500h7V13H1z"/><path fill="#ffe08a" stroke="none" d="M1 5.500h14V13H1z"/><path fill="#3f8fd6" stroke="none" d="M3 9h10v5h-3v-2H6v2H3z"/>`],
      ["Contatti", "", svg`<path fill="#2f8fdc" stroke="none" d="M1 3h14v10H1z"/><path fill="#bfe2ff" stroke="none" d="M3 5h4v5H3zM9 5h5v1H9zM9 7.500h5v1H9z"/>`],
      ["Skype", "", svg`<circle cx="8" cy="8" r="7" fill="#29b0ee" stroke="none"/><path stroke="#fff" stroke-width="1.600" d="M10.800 5.500C9 3.500 5.200 4.200 5.400 6.300 5.700 8.300 10.600 7.400 10.600 9.900 10.500 12.200 6.500 12.200 5 10.300"/>`],
      ["Desktop remoto", "", svg`<path fill="#4468d8" stroke="#dde" stroke-width=".8" d="M2 2l9-1 1 8-9 1z"/><path fill="#ccd" stroke="none" d="M5 11h6l1 2H4z"/><circle cx="12" cy="12" r="3" fill="#e8e8e8" stroke="none"/><path stroke="#378" d="M10.500 12l1 1 2-2"/>`],
      ["Internet Explorer", "", svg`<path stroke="#5cc4f4" stroke-width="2.500" d="M3.500 8.500h9C12.500 2 3.500 2.500 3.500 8.500c0 5.500 7 5.500 8.500 2.500"/><path stroke="#f4cc50" stroke-width="1.300" d="M2 14C-.5 11 10 0 14.500 2c1 .5.500 2 0 3"/>`],
      ["Acrobat", "", svg`<rect x="2" y="2" width="12.500" height="12" rx="1.500" fill="#b8141c" stroke="none"/><path stroke="#fff" d="M4.500 11.500C7 9.500 8.500 6 7.500 4.500 6.500 5.500 9 9.500 12 9.500c0-1-4-1-7.500 2z"/>`],
      ["Outlook", "open", svg`<path fill="#2a8de0" stroke="none" d="M5 1.500h9V11H5z"/><path fill="#0f62b8" stroke="none" d="M1 4h7v7H1z"/><circle cx="4.500" cy="7.500" r="2" stroke="#fff"/><path fill="#f6d27c" stroke="#fff" stroke-width=".6" d="M7 9h8v5.500H7zM7 9l4 3 4-3"/>`],
      ["Word", "", svg`<path fill="#2f7de0" stroke="none" d="M4 1.500h11v12.500H4z"/><path fill="#185abd" stroke="none" d="M1 4h8v8H1z"/><path stroke="#fff" d="M2.500 5.500l1.200 5L5 6.500l1.300 4 1.200-5"/>`],
      ["Excel", "cur", svg`<path fill="#2fa566" stroke="none" d="M4 1.500h11v12.500H4z"/><path fill="#107c41" stroke="none" d="M1 4h8v8H1z"/><path stroke="#fff" d="M3.500 6l3 4.500M6.500 6l-3 4.500"/>`],
      ["Chrome", "open", svg`<circle cx="8" cy="8" r="7" fill="#e8b92a" stroke="none"/><path fill="#de4a3c" stroke="none" d="M8 8L2 4.400a7 7 0 0 1 12.500 1z"/><path fill="#3ba55a" stroke="none" d="M8 8L2 4.400A7 7 0 0 0 7 15z"/><circle cx="8" cy="8" r="3" fill="#3f83e8" stroke="#fff"/><circle cx="12" cy="12" r="3.500" fill="#8a98a4" stroke="none"/><path stroke="#fff" stroke-width=".8" d="M10.500 13.500L12 10l1.500 3.500"/>`],
      ["App", "hot", svg`<circle cx="8" cy="8" r="7" fill="#8a80cc" stroke="#ddd"/><circle cx="8" cy="8" r="4" fill="#6f64ba" stroke="#fff" stroke-width="1.200"/><path stroke="#fff" stroke-width="1.500" d="M5 7h6"/>`],
      ["Teams", "open", svg`<circle cx="8" cy="3" r="2.300" fill="#7b83eb" stroke="none"/><circle cx="13" cy="4" r="1.700" fill="#6068d8" stroke="none"/><path fill="#6a72e0" stroke="none" d="M5 5.500h10V11q-4 6-9 2z"/><path fill="#4650b0" stroke="none" d="M1 4h8v8H1z"/><path stroke="#fff" d="M3 6h4M5 6v4.500"/><circle cx="12" cy="12.500" r="3" fill="#8cc04c" stroke="none"/><path stroke="#fff" d="M10.500 12.500l1 1 2-2"/>`],
      ["Webex", "open", svg`<rect x="1" y="1.500" width="14" height="13" rx="3" fill="#0a0f18" stroke="none"/><path stroke="#25c0d8" stroke-width="2" d="M7 5C4 2.500 2.500 5 3 8c.5 4 3 5 4.500 2.500L9 6.500"/><path stroke="#2f6df0" stroke-width="2" d="M8 9C8 5 11 3 12.500 5.500c1 2.500-.5 6.500-2.500 6-1 0-1.500-1-2-2.500"/>`],
    ];
    return html`<footer class="task">
      <button aria-label="Start">${icon(11, 11, svg`<path fill="#fff" stroke="none" d="M0 1.500l5-.7v4.400H0zM5.500.700L11 0v5.200H5.500zM0 5.800h5v4.400l-5-.7zM5.500 5.800H11V11l-5.500-.7z"/>`)}</button>
      <div class="row cerca">${icon(11, 11, svg`<circle cx="6.500" cy="4.500" r="3.700" stroke="#333"/><path stroke="#333" d="M4 7L.7 10.500"/>`)}<input aria-label="Cerca" placeholder="Cerca" /><span class="badge">#ilpianetachecresce</span></div>
      <div class="apps">${apps.map(([n, c, b]) => html`<button class=${c} aria-label=${n}>${icon(16, 16, b)}</button>`)}</div>
      <div class="row tray">
        <span class="row meteo">${icon(14, 14, svg`<circle cx="6.500" cy="7.500" r="6" fill="#f29a26" stroke="none"/><circle cx="10.500" cy="3.500" r="3.200" fill="#d8342c" stroke="none"/><path stroke="#fff" stroke-width=".8" d="M10.500 2v2.500"/>`)}<span>28°C&nbsp; Soleggiato</span></span>
        ${icon(9, 6, svg`<path stroke="#fff" d="M1 5l3.500-3.500L8 5"/>`)}
        ${icon(11, 9, svg`<path fill="#a8d0f0" stroke="none" d="M2 7.500C-1 6 1 3 3 3.500 4 0 8 1 8 3.500c3 0 3 3.500 1 4z"/><circle cx="8" cy="6" r="3" fill="#2f86d8" stroke="none"/>`)}
        ${icon(12, 8, svg`<path stroke="#fff" d="M3 2h7.500v4.500H3M.5 1v3h2V1M1.500 4v2.500"/>`)}
        ${icon(10, 9, svg`<path stroke="#fff" stroke-width=".8" d="M1 8.500A8 8 0 0 1 9 .5M3.500 8.500A5.500 5.500 0 0 1 9 3M6 8.500A3 3 0 0 1 9 5.500M1 8.500h8"/>`)}
        ${icon(11, 9, svg`<path stroke="#fff" stroke-width=".8" d="M.5 3h2L5 1v7L2.500 6h-2zM6.500 3q1 1.500 0 3M8 2q2 2.500 0 5M9.500 1q2.500 3.500 0 7"/>`)}
        <span class="clock">16:57<br />01/09/2023</span>
        ${icon(15, 14, svg`<path fill="#fff" stroke="none" d="M1 1h10v8H6l-2 2V9H1z"/><circle cx="10" cy="9.500" r="4.500" fill="#556070" stroke="none"/><text x="6.800" y="12" font-size="6" fill="#fff" stroke="none">10</text>`)}
      </div>
    </footer>`;
  }

  render() {
    return html`${this.titleBar()}${this.tabBar()}${this.ribbon()}${this.formulaBar()}${this.sheet()}${this.taskbar()}
      <svg class="ring" viewBox="0 0 203 87" aria-hidden="true"><ellipse cx="101.500" cy="43.500" rx="98.500" ry="41.500" fill="none" stroke="#d8222c" stroke-width="3" /></svg>`;
  }
}
